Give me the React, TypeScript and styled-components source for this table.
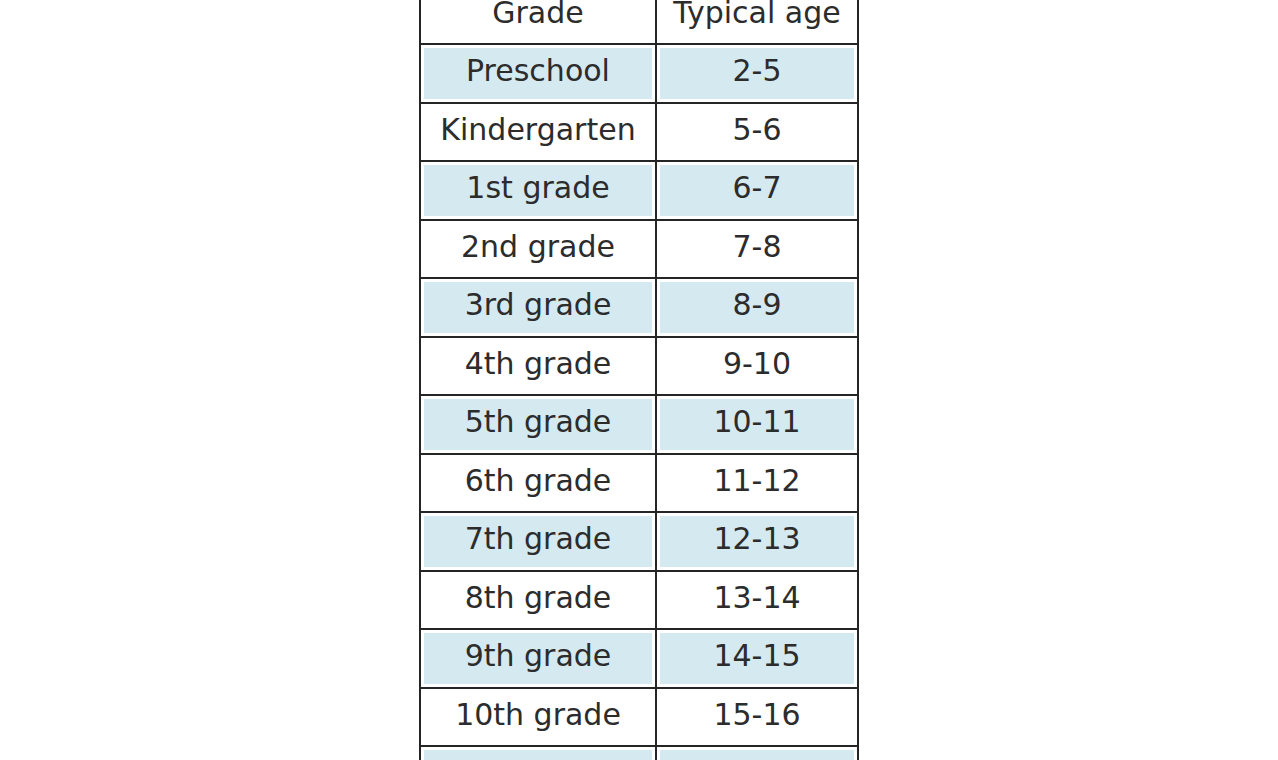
import React from "react";
import styled, { createGlobalStyle } from "styled-components";

const Global = createGlobalStyle`
  html, body { margin: 0; padding: 0; background: #ffffff; overflow: hidden; }
  body { font-family: "DejaVu Sans", "Liberation Sans", sans-serif; }
`;

const Page = styled.div`
  display: flex;
  justify-content: center;
  height: 760px;
  overflow: hidden;
`;

const Table = styled.div`
  display: grid;
  grid-template-columns: 234px 200px;
  grid-auto-rows: 56.5px;
  gap: 2px;
  padding: 2px;
  background: #252525;
  margin-top: -15.5px;
  align-self: flex-start;
`;

const Cell = styled.div<{ $shaded?: boolean }>`
  display: flex;
  align-items: center;
  justify-content: center;
  padding-bottom: 4px;
  box-sizing: border-box;
  background: ${(p) => (p.$shaded ? "#d4e9f0" : "#ffffff")};
  box-shadow: inset 0 0 0 3px #ffffff;
  color: #2c2c2c;
  font-size: 30px;
  line-height: 1;
  white-space: nowrap;
`;

const rows: [string, string][] = [
  ["Preschool", "2-5"],
  ["Kindergarten", "5-6"],
  ["1st grade", "6-7"],
  ["2nd grade", "7-8"],
  ["3rd grade", "8-9"],
  ["4th grade", "9-10"],
  ["5th grade", "10-11"],
  ["6th grade", "11-12"],
  ["7th grade", "12-13"],
  ["8th grade", "13-14"],
  ["9th grade", "14-15"],
  ["10th grade", "15-16"],
  ["11th grade", "16-17"],
  ["12th grade", "17-18"],
];

export default function App() {
  return (
    <>
      <Global />
      <Page>
        <Table>
          <Cell>Grade</Cell>
          <Cell>Typical age</Cell>
          {rows.map(([g, a], i) => (
            <React.Fragment key={g}>
              <Cell $shaded={i % 2 === 0}>{g}</Cell>
              <Cell $shaded={i % 2 === 0}>{a}</Cell>
            </React.Fragment>
          ))}
        </Table>
      </Page>
    </>
  );
}
